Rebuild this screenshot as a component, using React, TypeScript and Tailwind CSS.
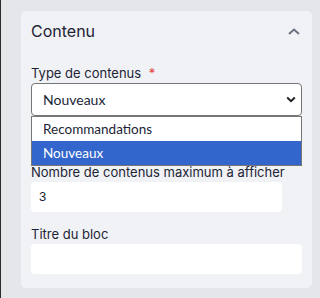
import React from "react";

const label = "font-['Inter',sans-serif] text-[13px] leading-[19px] text-[#1e2436]";
const sys = "font-['Lato',sans-serif]";

export default function App() {
  return (
    <div className="flex h-[298px] w-[320px] overflow-hidden bg-[#e5e6ea]">
      <div className="w-px shrink-0 bg-[#2b2b2b]" />
      <div className="ml-5 mt-[11px] h-[277px] w-[291px] shrink-0 rounded-[5px] bg-[#f0f2f5] px-[10px] pt-[8px]">
        <div className="flex h-6 items-center justify-between">
          <span className="font-['Inter',sans-serif] text-[16px] leading-6 text-[#1e2436]">Contenu</span>
          <svg width="12" height="7" viewBox="0 0 12 7" className="mr-[2px] mt-[1px]">
            <path d="M1 6 L6 1.5 L11 6" fill="none" stroke="#6b7280" strokeWidth="2" />
          </svg>
        </div>

        <div className={`mt-5 ${label} leading-[20px]`}>
          Type de contenus <span className="ml-[4px] text-[#e53e3e]">*</span>
        </div>
        <div className="relative">
          <div className={`flex h-[33px] items-center justify-between rounded-[4px] border border-[#767676] bg-white pl-[11px] pr-[5px] ${sys} text-[14px] text-[#1a1f36]`}>
            <span>Nouveaux</span>
            <svg width="10" height="7" viewBox="0 0 10 7">
              <path d="M1.2 1.5 L5 5.2 L8.8 1.5" fill="none" stroke="#222" strokeWidth="2" />
            </svg>
          </div>
          <div className={`absolute left-0 top-[33px] z-10 w-full border border-[#767676] bg-white ${sys} text-[13.5px]`}>
            <div className="flex h-[24px] items-center pl-[11px] text-[#1a1f36]">Recommandations</div>
            <div className="flex h-[24px] items-center bg-[#3366cc] pl-[11px] text-white">Nouveaux</div>
          </div>
        </div>

        <div className={`mt-[47px] ${label}`}>Nombre de contenus maximum à afficher</div>
        <div className="flex h-[30px] w-[251px] items-center rounded-[4px] bg-white pl-[8px] font-['Liberation_Sans',sans-serif] text-[13px] text-[#1a1f36]">
          3
        </div>

        <div className={`mt-[13px] ${label}`}>Titre du bloc</div>
        <div className="h-[30px] w-full rounded-[4px] bg-white" />
      </div>
    </div>
  );
}
